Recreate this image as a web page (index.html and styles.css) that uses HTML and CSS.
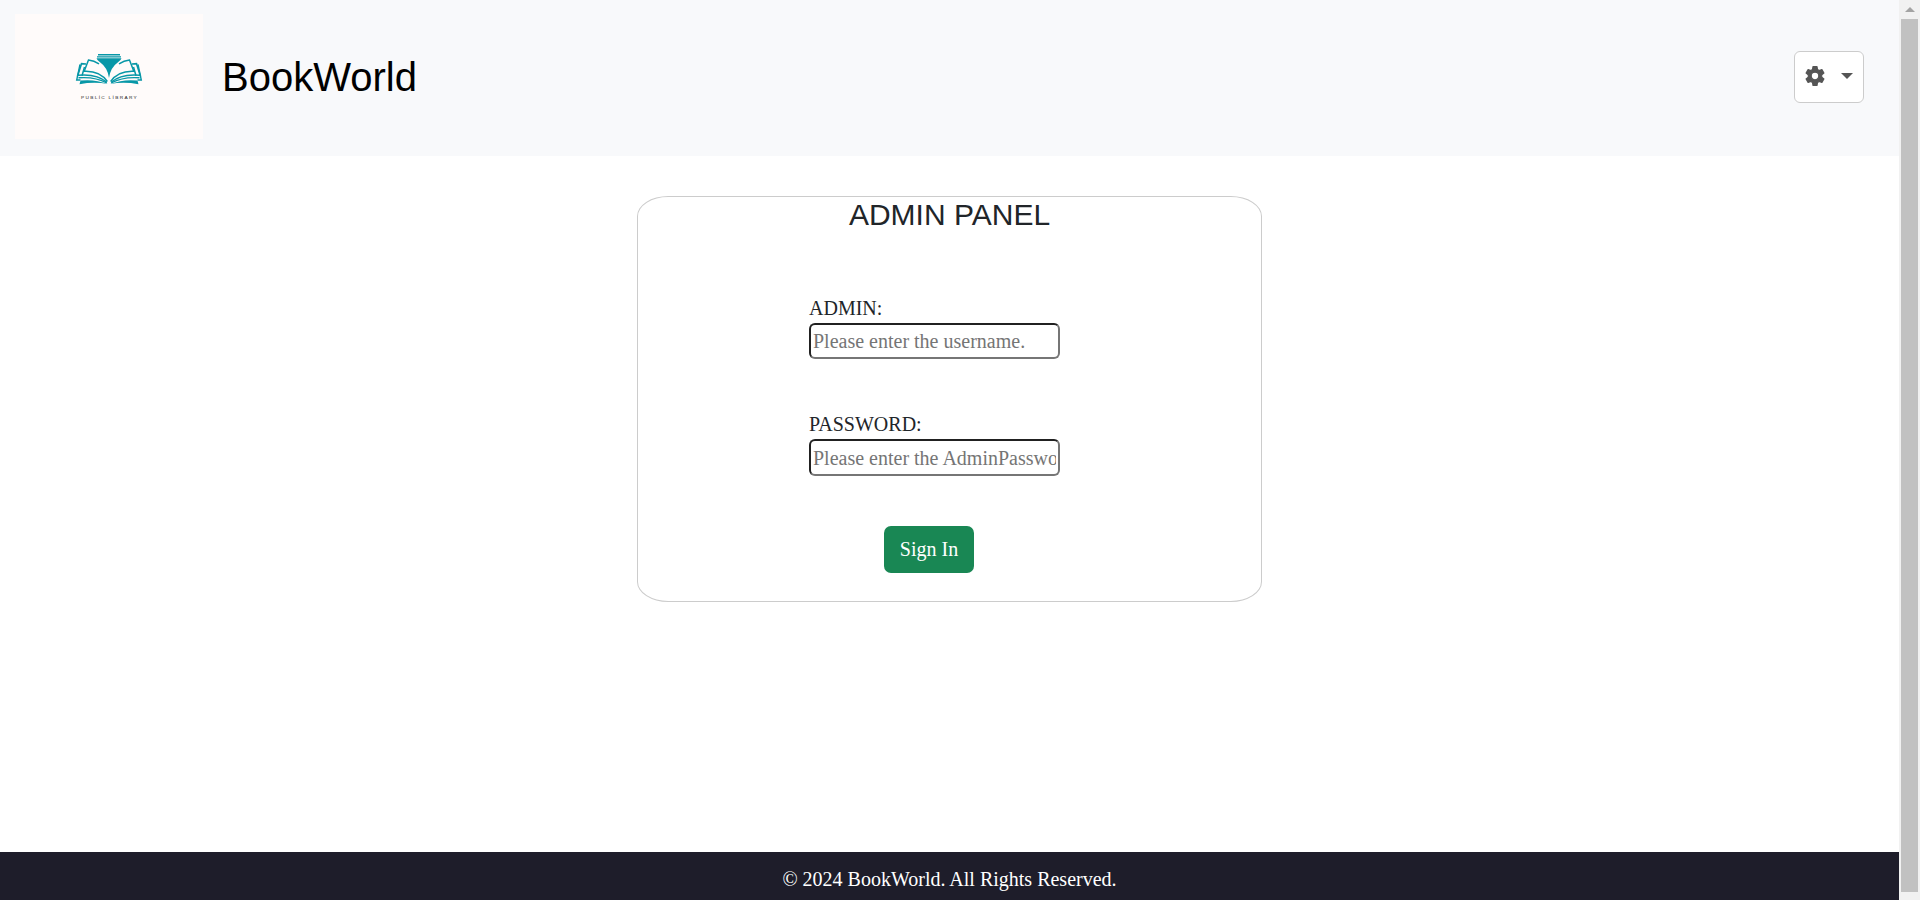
FILE: index.html
```html
<!DOCTYPE html>
<html lang="en">
<head>
<meta charset="utf-8">
<title>BookWorld</title>
<link rel="stylesheet" href="styles.css">
</head>
<body>
<div class="page">
  <header class="header">
    <svg class="logo" viewBox="0 0 188 125" role="img" aria-label="Public Library">
      <rect width="188" height="125" fill="#fffbfa"/>
      <g fill="#0797a7">
        <path d="M83 40h22v1.400H83zM82 42.200h24v1.200H82z"/>
        <path d="M81.500 44.200h25q-.6 2-3.500 4.100q-7.500 5.200-9 15.700q-1.500-10.500-9-15.700q-2.900-2.100-3.500-4.100z"/>
      </g>
      <g id="pages" fill="none" stroke="#0797a7" stroke-width="1.500">
        <path d="M84 49.800Q79 46.700 73.500 46.100L69.200 57.200Q85 56.500 92.300 67.500"/>
        <path d="M71 50L66.500 49.700L62.800 61.300Q82 59.500 91.800 68.300" stroke-width="1.600"/>
        <path d="M69.500 53L67 61.800"/>
        <path d="M65 50.500L61.700 66H65.500M63.500 63.800Q80 62.500 91.800 69" stroke-width="1.400"/>
        <path d="M93 70Q79 64.800 65.500 66.600L64.500 70.200Q79 67.600 93 70z" fill="#0797a7" stroke="none"/>
      </g>
      <use href="#pages" transform="matrix(-1 0 0 1 188 0)"/>
      <text x="66" y="84.700" font-family="Liberation Sans" font-size="3.600" textLength="57" lengthAdjust="spacingAndGlyphs" letter-spacing="1" fill="#222">PUBLİC LİBRARY</text>
    </svg>
    <h1 class="brand">BookWorld</h1>
    <button class="settings" type="button" aria-label="Settings">
      <svg class="gear" viewBox="0 0 20 20">
        <path fill="#555" stroke="#555" stroke-width="1.200" stroke-linejoin="round" fill-rule="evenodd" d="M8 .7h4l.5 2.900 1.700 1 2.700-1 2 3.400-2.200 1.900v2.200l2.200 1.900-2 3.400-2.700-1-1.700 1-.5 2.900H8l-.5-2.900-1.700-1-2.700 1-2-3.400 2.200-1.900V8.900L1.100 7l2-3.400 2.700 1 1.700-1zM10 6.200a3.800 3.800 0 1 0 0 7.600a3.800 3.800 0 1 0 0-7.600z"/>
      </svg>
      <span class="caret"></span>
    </button>
  </header>
  <main class="main">
    <section class="card">
      <h2 class="title">ADMIN PANEL</h2>
      <form class="form">
        <label class="field">ADMIN:
          <input class="input" type="text" placeholder="Please enter the username.">
        </label>
        <label class="field">PASSWORD:
          <input class="input input-tall" type="password" placeholder="Please enter the AdminPassword.">
        </label>
        <button class="submit" type="button">Sign In</button>
      </form>
    </section>
  </main>
  <footer class="footer">© 2024 BookWorld. All Rights Reserved.</footer>
</div>
<div class="scrollbar"><span class="arrow"></span><div class="thumb"></div></div>
</body>
</html>
```

FILE: styles.css
```css
* { box-sizing: border-box; }
body {
  margin: 0;
  height: 900px;
  display: grid;
  grid-template-columns: 1fr 21px;
  overflow: hidden;
  background: #fff;
  color: #212529;
  font: 20px/30px "Liberation Serif", "Times New Roman", serif;
}
.page { display: flex; flex-direction: column; height: 900px; }
.header {
  height: 156px;
  padding: 14px 35px 17px 15px;
  display: flex;
  align-items: center;
  background: #f8f9fb;
}
.logo { width: 188px; height: 125px; }
.brand {
  margin: 0 auto 0 19px;
  font: 400 40px/60px "Liberation Sans", Arial, sans-serif;
  color: #000;
}
.settings {
  width: 70px;
  height: 52px;
  padding: 0 10px 1px;
  display: flex;
  align-items: center;
  justify-content: space-between;
  background: #fff;
  border: 1px solid #ccc;
  border-radius: 6px;
}
.gear { width: 20px; height: 20px; }
.caret {
  margin-bottom: 1px;
  border: 6px solid transparent;
  border-top-color: #555;
  border-bottom: 0;
}
.main { flex: 1; padding-top: 40px; }
.card {
  width: 625px;
  height: 406px;
  margin: 0 auto;
  border: 1px solid #ccc;
  border-radius: 5%;
}
.title {
  margin: 0;
  text-align: center;
  font: 400 30px/36px "Liberation Sans", Arial, sans-serif;
}
.form {
  padding: 60px 0 0 171px;
  display: flex;
  flex-direction: column;
  align-items: flex-start;
}
.field { height: 116px; display: block; width: 251px; }
.input {
  display: block;
  width: 251px;
  height: 36px;
  padding: 2px 2px 1px;
  border: 2px inset #767676;
  border-radius: 6px;
  background: #fff;
  color: inherit;
  font: inherit;
}
.input-tall { height: 37px; }
.input::placeholder { color: #757575; }
.submit {
  margin: 1px 0 0 75px;
  width: 90px;
  height: 47px;
  padding: 0 0 1px;
  border: 0;
  border-radius: 7px;
  background: #198754;
  color: #fff;
  font: inherit;
}
.footer {
  height: 48px;
  padding-top: 12px;
  text-align: center;
  background: #1e1d2a;
  color: #fff;
}
.scrollbar {
  padding: 7px 2px 8px;
  display: flex;
  flex-direction: column;
  align-items: center;
  background: #f1f1f1;
}
.arrow {
  margin-bottom: 7px;
  border: 5px solid transparent;
  border-top: 0;
  border-bottom-color: #a3a3a3;
}
.thumb { flex: 1; width: 17px; background: #c1c1c1; }
```
